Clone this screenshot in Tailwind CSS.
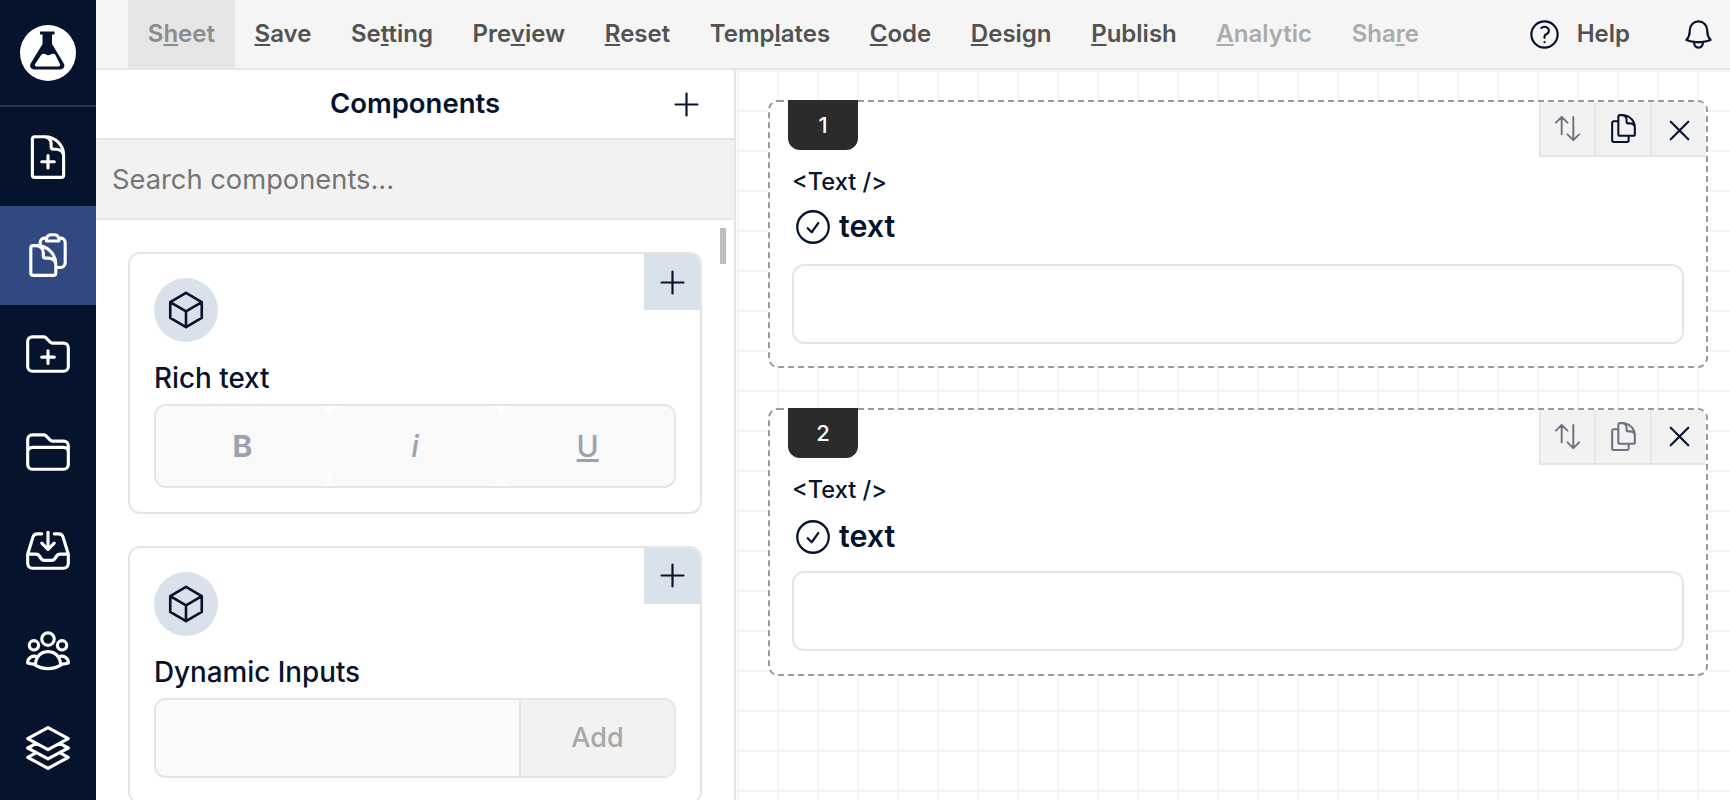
<!DOCTYPE html>
<html lang="en">
<head>
    <meta charset="UTF-8">
    <title>Form Builder</title>
    <script src="https://cdn.jsdelivr.net/npm/@tailwindcss/browser@4"></script>
</head>
<body class="h-[800px] overflow-hidden bg-white font-['Inter',sans-serif] text-[#06132d]">
<div class="flex h-[800px]">
    <!-- sidebar -->
    <aside class="flex w-[96px] shrink-0 flex-col bg-[#06132d] text-white">
        <div class="flex h-[107.4px] items-start justify-center border-b-2 border-[#2a3654] pt-[25px]">
            <svg class="size-[56px]" viewBox="0 0 56 56">
                <circle cx="28" cy="28" r="28" fill="#fff"/>
                <path fill="#06132d" d="M20 6.500h14.500v3h-2.500V19l11.800 19.600c1.500 2.600-.2 5.900-3.300 5.900H14c-3.100 0-4.800-3.300-3.300-5.900L22.500 19V9.500H20z"/>
                <path fill="#fff" d="M21.500 29.500c2-1.300 3.500-.5 5.500.4 2.200 1 3.200-.4 5-.9 1.500-.4 2.600-.2 3.500 1l4.500 9.200c.5 1.100-.2 2.300-1.500 2.300H16.500c-1.300 0-2-1.200-1.500-2.300z"/>
            </svg>
        </div>
        <a class="flex h-[98.6px] items-center justify-center">
            <svg class="size-[50px]" fill="none" viewBox="0 0 24 24" stroke="currentColor" stroke-width="1.5" stroke-linecap="round" stroke-linejoin="round"><path d="M19.500 14.250v-2.625a3.375 3.375 0 0 0-3.375-3.375h-1.500A1.125 1.125 0 0 1 13.500 7.125v-1.500a3.375 3.375 0 0 0-3.375-3.375H8.250m3.750 9v6m3-3H9m1.500-12H5.625c-.621 0-1.125.504-1.125 1.125v17.250c0 .621.504 1.125 1.125 1.125h12.750c.621 0 1.125-.504 1.125-1.125V11.250a9 9 0 0 0-9-9Z"/></svg>
        </a>
        <a class="flex h-[98.6px] items-center justify-center bg-[#324880]">
            <svg class="size-[50px]" fill="none" viewBox="0 0 24 24" stroke="currentColor" stroke-width="1.5" stroke-linecap="round" stroke-linejoin="round"><path d="M8.250 7.500V6.108c0-1.135.845-2.098 1.976-2.192.373-.03.748-.057 1.123-.08M15.750 18H18a2.250 2.250 0 0 0 2.250-2.250V6.108c0-1.135-.845-2.098-1.976-2.192a48.424 48.424 0 0 0-1.123-.08M15.750 18.750v-1.875a3.375 3.375 0 0 0-3.375-3.375h-1.500a1.125 1.125 0 0 1-1.125-1.125v-1.500A3.375 3.375 0 0 0 6.375 7.500H5.250m11.900-3.664A2.251 2.251 0 0 0 15 2.250h-1.500a2.251 2.251 0 0 0-2.150 1.586m5.800 0c.065.21.1.433.1.664v.75h-6V4.500c0-.231.035-.454.1-.664M6.750 7.500H4.875c-.621 0-1.125.504-1.125 1.125v12c0 .621.504 1.125 1.125 1.125h9.750c.621 0 1.125-.504 1.125-1.125V16.500a9 9 0 0 0-9-9Z"/></svg>
        </a>
        <a class="flex h-[98.6px] items-center justify-center">
            <svg class="size-[50px]" fill="none" viewBox="0 0 24 24" stroke="currentColor" stroke-width="1.5" stroke-linecap="round" stroke-linejoin="round"><path d="M12 10.500v6m3-3H9m4.060-7.190-2.120-2.120a1.500 1.500 0 0 0-1.061-.44H4.500A2.250 2.250 0 0 0 2.250 6v12a2.250 2.250 0 0 0 2.250 2.250h15A2.250 2.250 0 0 0 21.750 18V9a2.250 2.250 0 0 0-2.250-2.250h-5.379a1.500 1.500 0 0 1-1.060-.44Z"/></svg>
        </a>
        <a class="flex h-[98.6px] items-center justify-center">
            <svg class="size-[50px]" fill="none" viewBox="0 0 24 24" stroke="currentColor" stroke-width="1.5" stroke-linecap="round" stroke-linejoin="round"><path d="M2.250 12.750V12A2.250 2.250 0 0 1 4.500 9.750h15A2.250 2.250 0 0 1 21.750 12v.75m-8.690-6.440-2.120-2.120a1.500 1.500 0 0 0-1.061-.44H4.500A2.250 2.250 0 0 0 2.250 6v12a2.250 2.250 0 0 0 2.250 2.250h15A2.250 2.250 0 0 0 21.750 18V9a2.250 2.250 0 0 0-2.250-2.250h-5.379a1.500 1.500 0 0 1-1.060-.44Z"/></svg>
        </a>
        <a class="flex h-[98.6px] items-center justify-center">
            <svg class="size-[50px]" fill="none" viewBox="0 0 24 24" stroke="currentColor" stroke-width="1.5" stroke-linecap="round" stroke-linejoin="round"><path d="M9 3.750H6.912a2.250 2.250 0 0 0-2.150 1.588L2.350 13.177a2.250 2.250 0 0 0-.1.661V18a2.250 2.250 0 0 0 2.250 2.250h15A2.250 2.250 0 0 0 21.750 18v-4.162c0-.224-.034-.447-.1-.661L19.240 5.338a2.250 2.250 0 0 0-2.150-1.588H15M2.250 13.500h3.860a2.250 2.250 0 0 1 2.012 1.244l.256.512a2.250 2.250 0 0 0 2.013 1.244h3.218a2.250 2.250 0 0 0 2.013-1.244l.256-.512a2.250 2.250 0 0 1 2.013-1.244h3.859M12 3v8.250m0 0-3-3m3 3 3-3"/></svg>
        </a>
        <a class="flex h-[98.6px] items-center justify-center">
            <svg class="size-[50px]" fill="none" viewBox="0 0 24 24" stroke="currentColor" stroke-width="1.5" stroke-linecap="round" stroke-linejoin="round"><path d="M18 18.720a9.094 9.094 0 0 0 3.741-.479 3 3 0 0 0-4.682-2.720m.94 3.198.001.031c0 .225-.012.447-.037.666A11.944 11.944 0 0 1 12 21c-2.170 0-4.207-.576-5.963-1.584A6.062 6.062 0 0 1 6 18.719m12 0a5.971 5.971 0 0 0-.941-3.197m0 0A5.995 5.995 0 0 0 12 12.750a5.995 5.995 0 0 0-5.058 2.772m0 0a3 3 0 0 0-4.681 2.720 8.986 8.986 0 0 0 3.740.477m.94-3.197a5.971 5.971 0 0 0-.94 3.197M15 6.750a3 3 0 1 1-6 0 3 3 0 0 1 6 0Zm6 3a2.250 2.250 0 1 1-4.500 0 2.250 2.250 0 0 1 4.500 0Zm-13.500 0a2.250 2.250 0 1 1-4.500 0 2.250 2.250 0 0 1 4.500 0Z"/></svg>
        </a>
        <a class="flex h-[98.6px] items-center justify-center">
            <svg class="size-[50px]" fill="none" viewBox="0 0 24 24" stroke="currentColor" stroke-width="1.5" stroke-linecap="round" stroke-linejoin="round"><path d="M6.429 9.750 2.250 12l4.179 2.250m0-4.500 5.571 3 5.571-3m-11.142 0L2.250 7.500 12 2.250l9.750 5.250-4.179 2.250m0 0L21.750 12l-4.179 2.250m0 0 4.179 2.250L12 21.750 2.250 16.500l4.179-2.250m11.142 0-5.571 3-5.571-3"/></svg>
        </a>
    </aside>

    <div class="flex min-w-0 flex-1 flex-col">
        <!-- top menu -->
        <header class="flex h-[70px] shrink-0 items-start border-b-2 border-[#e5e5e5] bg-[#f5f5f5] pl-[32px] text-[24px] font-semibold text-[#525252]">
            <a class="flex h-[68px] items-center bg-[#e5e5e5] px-[19.8px] text-[#8c8c8c]"><span>S<u>h</u>eet</span></a>
            <a class="flex h-[68px] items-center px-[19.8px]"><span><u>S</u>ave</span></a>
            <a class="flex h-[68px] items-center px-[19.8px]"><span>Se<u>t</u>ting</span></a>
            <a class="flex h-[68px] items-center px-[19.8px]"><span>Pre<u>v</u>iew</span></a>
            <a class="flex h-[68px] items-center px-[19.8px]"><span><u>R</u>eset</span></a>
            <a class="flex h-[68px] items-center px-[19.8px]"><span>Temp<u>l</u>ates</span></a>
            <a class="flex h-[68px] items-center px-[19.8px]"><span><u>C</u>ode</span></a>
            <a class="flex h-[68px] items-center px-[19.8px]"><span><u>D</u>esign</span></a>
            <a class="flex h-[68px] items-center px-[19.8px]"><span><u>P</u>ublish</span></a>
            <a class="flex h-[68px] items-center px-[19.8px] text-[#ababab]"><span><u>A</u>nalytic</span></a>
            <a class="flex h-[68px] items-center px-[19.8px] text-[#ababab]"><span>Sha<u>r</u>e</span></a>
            <div class="ml-auto flex h-[68px] items-center pr-[14px] text-[#06132d]">
                <svg class="size-[35px]" fill="none" viewBox="0 0 24 24" stroke="currentColor" stroke-width="1.5" stroke-linecap="round" stroke-linejoin="round"><path d="M9.879 7.519c1.171-1.025 3.071-1.025 4.242 0 1.172 1.025 1.172 2.687 0 3.712-.203.179-.43.326-.67.442-.745.361-1.450.999-1.450 1.827v.75M21 12a9 9 0 1 1-18 0 9 9 0 0 1 18 0Zm-9 5.250h.008v.008H12v-.008Z"/></svg>
                <span class="ml-[15px] text-[#525252]">Help</span>
                <svg class="ml-[51px] size-[35px]" fill="none" viewBox="0 0 24 24" stroke="currentColor" stroke-width="1.5" stroke-linecap="round" stroke-linejoin="round"><path d="M14.857 17.082a23.848 23.848 0 0 0 5.454-1.310A8.967 8.967 0 0 1 18 9.750V9A6 6 0 0 0 6 9v.75a8.967 8.967 0 0 1-2.312 6.022c1.733.64 3.560 1.085 5.455 1.310m5.714 0a24.255 24.255 0 0 1-5.714 0m5.714 0a3 3 0 1 1-5.714 0"/></svg>
            </div>
        </header>

        <div class="flex min-h-0 flex-1">
            <!-- components panel -->
            <section class="relative w-[640px] shrink-0 overflow-hidden border-r-2 border-[#e5e5e5] bg-white">
                <div class="grid h-[70px] grid-cols-[1fr_auto_1fr] items-center border-b-2 border-[#e5e5e5]">
                    <span></span>
                    <h2 class="text-[27.5px] font-semibold">Components</h2>
                    <span class="flex justify-end pr-[30px]">
                        <svg class="size-[35px]" fill="none" viewBox="0 0 24 24" stroke="currentColor" stroke-width="1.5" stroke-linecap="round" stroke-linejoin="round"><path d="M12 4.500v15m7.500-7.500h-15"/></svg>
                    </span>
                </div>
                <input placeholder="Search components..." class="block h-[80px] w-full border-b-2 border-[#e5e5e5] bg-[#f3f2f3] px-[16px] text-[27.3px] outline-none placeholder:text-[#757575]">

                <div class="absolute left-[624px] top-[158px] h-[36px] w-[6px] bg-[#bdbdbd]"></div>

                <div class="pl-[32px] pt-[32px]">
                    <div class="relative w-[574px] overflow-hidden rounded-xl border-2 border-[#e5e5e5] p-[24px]">
                        <div class="absolute right-0 top-0 flex h-[56px] w-[56px] items-center justify-center bg-[#d9e2ea]">
                            <svg class="size-[35px]" fill="none" viewBox="0 0 24 24" stroke="currentColor" stroke-width="1.5" stroke-linecap="round" stroke-linejoin="round"><path d="M12 4.500v15m7.500-7.500h-15"/></svg>
                        </div>
                        <div class="flex size-[64px] items-center justify-center rounded-full bg-[#d9e2ea]">
                            <svg class="size-[42px]" fill="none" viewBox="0 0 24 24" stroke="currentColor" stroke-width="1.5" stroke-linecap="round" stroke-linejoin="round"><path d="m21 7.500-9-5.250L3 7.500m18 0-9 5.250m9-5.250v9l-9 5.250M3 7.500l9 5.250M3 7.500v9l9 5.250m0-9v9"/></svg>
                        </div>
                        <div class="mt-[20px] h-[32px] text-[27.8px] font-medium leading-[32px]">Rich text</div>
                        <div class="mt-[10px] flex h-[84px] rounded-xl border-2 border-[#e5e5e5] text-[30px] text-[#9ca3af]">
                            <div class="flex flex-1 items-center justify-center rounded-xl bg-[#f9f9f9] font-bold">B</div>
                            <div class="flex flex-1 items-center justify-center rounded-xl bg-[#f9f9f9] font-medium italic">i</div>
                            <div class="flex flex-1 items-center justify-center rounded-xl bg-[#f9f9f9] font-medium underline">U</div>
                        </div>
                    </div>

                    <div class="relative mt-[32px] w-[574px] overflow-hidden rounded-xl border-2 border-[#e5e5e5] p-[24px]">
                        <div class="absolute right-0 top-0 flex h-[56px] w-[56px] items-center justify-center bg-[#d9e2ea] pb-[2px]">
                            <svg class="size-[35px]" fill="none" viewBox="0 0 24 24" stroke="currentColor" stroke-width="1.5" stroke-linecap="round" stroke-linejoin="round"><path d="M12 4.500v15m7.500-7.500h-15"/></svg>
                        </div>
                        <div class="flex size-[64px] items-center justify-center rounded-full bg-[#d9e2ea]">
                            <svg class="size-[42px]" fill="none" viewBox="0 0 24 24" stroke="currentColor" stroke-width="1.5" stroke-linecap="round" stroke-linejoin="round"><path d="m21 7.500-9-5.250L3 7.500m18 0-9 5.250m9-5.250v9l-9 5.250M3 7.500l9 5.250M3 7.500v9l9 5.250m0-9v9"/></svg>
                        </div>
                        <div class="mt-[20px] h-[32px] text-[27.8px] font-medium leading-[32px]">Dynamic Inputs</div>
                        <div class="mt-[10px] flex h-[80px] overflow-hidden rounded-xl border-2 border-[#e5e5e5]">
                            <div class="flex-1 bg-[#fafafa]"></div>
                            <div class="flex w-[155px] items-center justify-center border-l-2 border-[#e5e5e5] bg-[#f3f2f3] text-[27px] font-medium text-[#a8a8a8]">Add</div>
                        </div>
                    </div>
                </div>
            </section>

            <!-- canvas -->
            <main class="flex-1 bg-white bg-[linear-gradient(to_right,#f4f5f7_2px,transparent_2px),linear-gradient(to_bottom,#f4f5f7_2px,transparent_2px)] bg-[size:40px_40px] bg-[position:1px_0] pl-[32px] pr-[22px] pt-[30px]">
                <div class="relative h-[268px] rounded-lg border-2 border-transparent bg-white">
                    <svg class="absolute -left-[2px] -top-[2px] h-[268px] w-[940px]" fill="none"><rect x="1" y="1" width="938" height="266" rx="9" stroke="#9a9a9a" stroke-width="2" stroke-dasharray="6 4"/></svg>
                    <div class="relative -mt-[2px] ml-[18px] flex h-[50px] w-[70px] items-center justify-center rounded-b-xl bg-[#2b2b2b] text-[22px] font-medium text-white">1</div>
                    <div class="ml-[22px] mt-[17px] h-[30px] text-[23.6px] font-medium leading-[30px]">&lt;Text /&gt;</div>
                    <div class="ml-[22px] mt-[9px] flex h-[42px] items-center">
                        <svg class="size-[42px] shrink-0" fill="none" viewBox="0 0 24 24" stroke="currentColor" stroke-width="1.3" stroke-linecap="round" stroke-linejoin="round"><path d="M9 12.750 11.250 15 15 9.750M21 12a9 9 0 1 1-18 0 9 9 0 0 1 18 0Z"/></svg>
                        <span class="ml-[5px] text-[30.4px] font-semibold">text</span>
                    </div>
                    <div class="ml-[22px] mt-[16px] h-[80px] w-[892px] rounded-xl border-2 border-[#e5e5e5]"></div>
                    <div class="absolute right-0 top-0 flex h-[55px] rounded-tr-lg border-b-2 border-l-2 border-[#e5e5e5] bg-[#f3f2f3]">
                        <div class="flex w-[55px] items-center justify-center border-r-2 border-[#e5e5e5] text-[#6b7280]">
                            <svg class="size-[31px]" fill="none" viewBox="0 0 24 24" stroke="currentColor" stroke-width="1.5" stroke-linecap="round" stroke-linejoin="round"><path d="M3 7.500 7.500 3m0 0L12 7.500M7.500 3v13.500m13.500 0L16.500 21m0 0L12 16.500m4.500 4.500V3"/></svg>
                        </div>
                        <div class="flex w-[56px] items-center justify-center border-r-2 border-[#e5e5e5]">
                            <svg class="size-[33px]" fill="none" viewBox="0 0 24 24" stroke="currentColor" stroke-width="1.5" stroke-linecap="round" stroke-linejoin="round"><path d="M15.750 17.250v3.375c0 .621-.504 1.125-1.125 1.125h-9.750a1.125 1.125 0 0 1-1.125-1.125V7.875c0-.621.504-1.125 1.125-1.125H6.750a9.060 9.060 0 0 1 1.500.124m7.500 10.376h3.375c.621 0 1.125-.504 1.125-1.125V11.250c0-4.460-3.243-8.161-7.500-8.876a9.060 9.060 0 0 0-1.500-.124H9.375c-.621 0-1.125.504-1.125 1.125v3.500m7.500 10.375H9.375a1.125 1.125 0 0 1-1.125-1.125v-9.250m12 6.625v-1.875a3.375 3.375 0 0 0-3.375-3.375h-1.500a1.125 1.125 0 0 1-1.125-1.125v-1.500a3.375 3.375 0 0 0-3.375-3.375H9.750"/></svg>
                        </div>
                        <div class="flex w-[54px] items-center justify-center pt-[3px]">
                            <svg class="size-[35px]" fill="none" viewBox="0 0 24 24" stroke="currentColor" stroke-width="1.5" stroke-linecap="round" stroke-linejoin="round"><path d="M6 18 18 6M6 6l12 12"/></svg>
                        </div>
                    </div>
                </div>

                <div class="relative mt-[40px] h-[268px] rounded-lg border-2 border-transparent bg-white">
                    <svg class="absolute -left-[2px] -top-[2px] h-[268px] w-[940px]" fill="none"><rect x="1" y="1" width="938" height="266" rx="9" stroke="#9a9a9a" stroke-width="2" stroke-dasharray="6 4"/></svg>
                    <div class="relative -mt-[2px] ml-[18px] flex h-[50px] w-[70px] items-center justify-center rounded-b-xl bg-[#2b2b2b] text-[22px] font-medium text-white">2</div>
                    <div class="ml-[22px] mt-[17px] h-[30px] text-[23.6px] font-medium leading-[30px]">&lt;Text /&gt;</div>
                    <div class="ml-[22px] mt-[11px] flex h-[42px] items-center">
                        <svg class="size-[42px] shrink-0" fill="none" viewBox="0 0 24 24" stroke="currentColor" stroke-width="1.3" stroke-linecap="round" stroke-linejoin="round"><path d="M9 12.750 11.250 15 15 9.750M21 12a9 9 0 1 1-18 0 9 9 0 0 1 18 0Z"/></svg>
                        <span class="ml-[5px] text-[30.4px] font-semibold">text</span>
                    </div>
                    <div class="ml-[22px] mt-[13px] h-[80px] w-[892px] rounded-xl border-2 border-[#e5e5e5]"></div>
                    <div class="absolute right-0 top-0 flex h-[55px] rounded-tr-lg border-b-2 border-l-2 border-[#e5e5e5] bg-[#f3f2f3] text-[#6b7280]">
                        <div class="flex w-[55px] items-center justify-center border-r-2 border-[#e5e5e5]">
                            <svg class="size-[31px]" fill="none" viewBox="0 0 24 24" stroke="currentColor" stroke-width="1.5" stroke-linecap="round" stroke-linejoin="round"><path d="M3 7.500 7.500 3m0 0L12 7.500M7.500 3v13.500m13.500 0L16.500 21m0 0L12 16.500m4.500 4.500V3"/></svg>
                        </div>
                        <div class="flex w-[56px] items-center justify-center border-r-2 border-[#e5e5e5]">
                            <svg class="size-[33px]" fill="none" viewBox="0 0 24 24" stroke="currentColor" stroke-width="1.5" stroke-linecap="round" stroke-linejoin="round"><path d="M15.750 17.250v3.375c0 .621-.504 1.125-1.125 1.125h-9.750a1.125 1.125 0 0 1-1.125-1.125V7.875c0-.621.504-1.125 1.125-1.125H6.750a9.060 9.060 0 0 1 1.500.124m7.500 10.376h3.375c.621 0 1.125-.504 1.125-1.125V11.250c0-4.460-3.243-8.161-7.500-8.876a9.060 9.060 0 0 0-1.500-.124H9.375c-.621 0-1.125.504-1.125 1.125v3.500m7.500 10.375H9.375a1.125 1.125 0 0 1-1.125-1.125v-9.250m12 6.625v-1.875a3.375 3.375 0 0 0-3.375-3.375h-1.500a1.125 1.125 0 0 1-1.125-1.125v-1.500a3.375 3.375 0 0 0-3.375-3.375H9.750"/></svg>
                        </div>
                        <div class="flex w-[54px] items-center justify-center text-[#06132d]">
                            <svg class="size-[35px]" fill="none" viewBox="0 0 24 24" stroke="currentColor" stroke-width="1.5" stroke-linecap="round" stroke-linejoin="round"><path d="M6 18 18 6M6 6l12 12"/></svg>
                        </div>
                    </div>
                </div>
            </main>
        </div>
    </div>
</div>
</body>
</html>
